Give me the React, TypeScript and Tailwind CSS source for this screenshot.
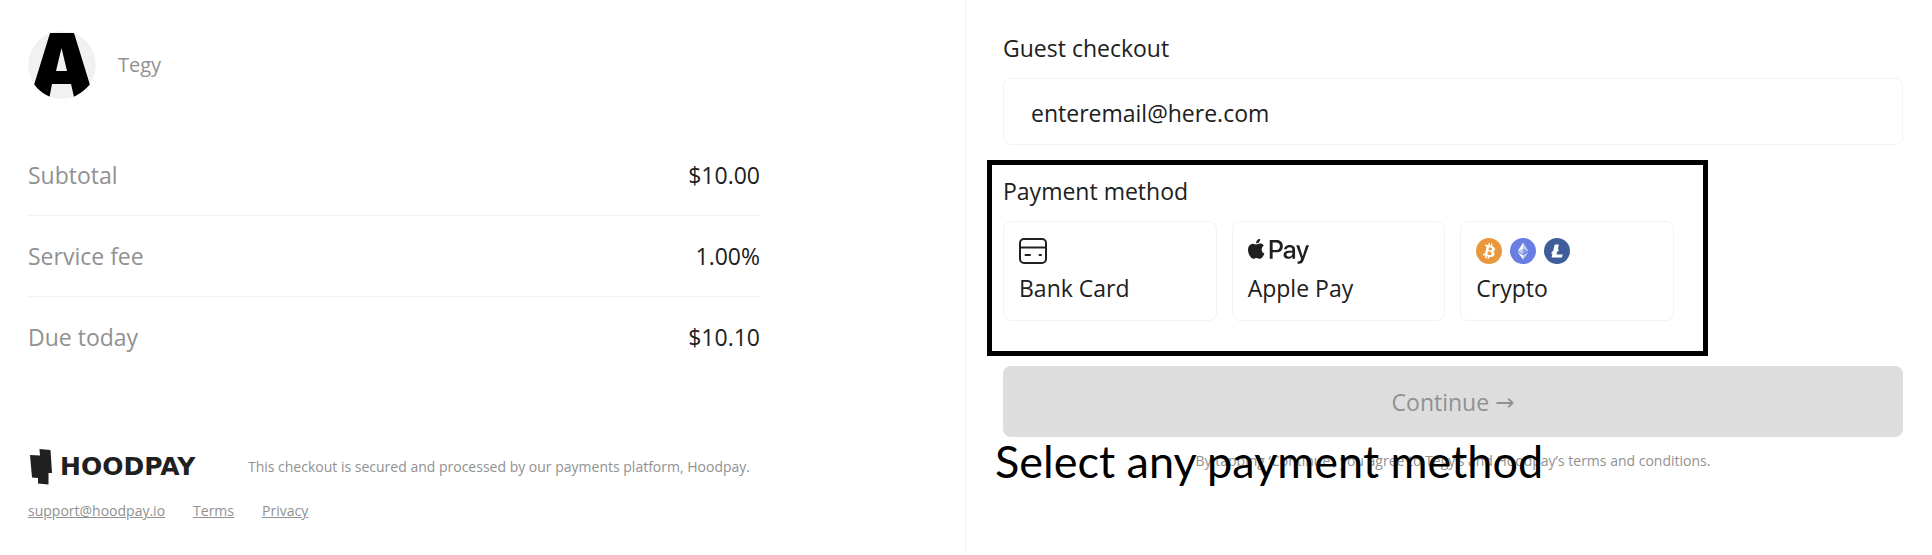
import type { ReactNode } from "react";
import { FaApplePay } from "react-icons/fa";

const charges = [
  { label: "Subtotal", value: "$10.00" },
  { label: "Service fee", value: "1.00%" },
  { label: "Due today", value: "$10.10" },
];

function Avatar() {
  return (
    <svg viewBox="0 0 68 68" className="size-[68px] shrink-0 rounded-full" aria-hidden="true">
      <circle cx="34" cy="34" r="34" fill="#f1f1f1" />
      <path
        fillRule="evenodd"
        d="M22 2H46L62 54Q55 61 46 66L43 53H24L21.500 66Q12 62 6 54ZM33.500 17L28 40H39Z"
        fill="#000"
      />
    </svg>
  );
}

function HoodpayMark() {
  return (
    <svg viewBox="0 0 22 36" className="h-9 w-[22px] shrink-0" aria-hidden="true">
      <path d="M9.500 0L20.500 1L22 24H18.500V35.500L8 34.500V29L2 28.500L0 6L10 6.500Z" fill="#202020" />
    </svg>
  );
}

function CardIcon() {
  return (
    <svg viewBox="0 0 28 26" className="h-[26px] w-7" fill="none" stroke="#202020" aria-hidden="true">
      <rect x="1" y="1" width="26" height="24" rx="4" strokeWidth="2" />
      <path d="M1 9.500H27" strokeWidth="2" />
      <path d="M6.500 17H11M20.500 17H22" strokeWidth="2" strokeLinecap="round" />
    </svg>
  );
}

function CryptoIcons() {
  return (
    <span className="flex gap-2">
      <svg viewBox="0 0 32 32" className="size-[26px]" aria-hidden="true">
        <circle cx="16" cy="16" r="16" fill="#e9983d" />
        <path
          fill="#fff"
          d="M23.189 14.020c.314-2.096-1.283-3.223-3.465-3.975l.708-2.840-1.728-.43-.69 2.765c-.454-.114-.92-.22-1.385-.326l.695-2.783L15.596 6l-.708 2.839c-.376-.086-.746-.17-1.104-.26l.002-.009-2.384-.595-.46 1.846s1.283.294 1.256.312c.7.175.826.638.805 1.006l-.806 3.235c.048.012.11.030.18.057l-.183-.045-1.130 4.532c-.086.212-.303.531-.793.410.018.025-1.256-.313-1.256-.313l-.858 1.978 2.250.561c.418.105.828.215 1.231.318l-.715 2.872 1.727.43.708-2.840c.472.127.930.245 1.378.357l-.706 2.828 1.728.43.715-2.866c2.948.558 5.164.333 6.097-2.333.752-2.146-.037-3.385-1.588-4.192 1.130-.260 1.980-1.003 2.207-2.538zm-3.950 5.538c-.533 2.147-4.148.986-5.320.695l.950-3.805c1.172.293 4.929.872 4.370 3.110zm.535-5.569c-.487 1.953-3.495.960-4.470.717l.860-3.450c.975.243 4.118.696 3.610 2.733z"
        />
      </svg>
      <svg viewBox="0 0 32 32" className="size-[26px]" aria-hidden="true">
        <circle cx="16" cy="16" r="16" fill="#687ee3" />
        <g fill="#fff">
          <path fillOpacity=".6" d="M16.200 5.500v7.800l6.600 2.950z" />
          <path d="M16.200 5.500L9.500 16.250l6.700-2.950z" />
          <path fillOpacity=".6" d="M16.200 21.200v5.300l6.600-9.100z" />
          <path d="M16.200 26.500v-5.300l-6.700-3.800z" />
          <path fillOpacity=".2" d="M16.200 20l6.600-3.750-6.600-2.950z" />
          <path fillOpacity=".6" d="M9.500 16.250L16.200 20v-6.700z" />
        </g>
      </svg>
      <svg viewBox="0 0 32 32" className="size-[26px]" aria-hidden="true">
        <circle cx="16" cy="16" r="16" fill="#3f5e99" />
        <path
          fill="#fff"
          d="M10.430 19.210l-1.430.550.690-2.760 1.450-.580L13.210 8h5.130l-1.520 6.190 1.410-.570-.680 2.750-1.430.570-.850 3.470H23L22.130 24H9.250z"
        />
      </svg>
    </span>
  );
}

function Method({ label, children }: { label: string; children: ReactNode }) {
  return (
    <button
      type="button"
      className="flex min-w-0 flex-1 flex-col gap-2 rounded-lg border border-[#f3f3f3] px-[15px] py-4 text-left"
    >
      <span className="flex h-[26px] items-center">{children}</span>
      <span className="leading-8">{label}</span>
    </button>
  );
}

export default function App() {
  return (
    <div className="grid min-h-screen grid-cols-2 bg-white font-['Open_Sans',sans-serif] text-[23px] leading-8 text-[#202020]">
      <section className="border-r border-[#f3f3f3] pt-[31px] pl-7 text-[#919191]">
        <div className="max-w-[732px]">
          <header className="flex items-center gap-[22px]">
            <Avatar />
            <h1 className="text-xl">Tegy</h1>
          </header>
          <dl className="mt-9 divide-y divide-[#f3f3f3]">
            {charges.map((c) => (
              <div key={c.label} className="flex justify-between py-6">
                <dt>{c.label}</dt>
                <dd className="text-[#202020]">{c.value}</dd>
              </div>
            ))}
          </dl>
          <footer className="mt-[72px] text-sm">
            <div className="flex items-center justify-between pr-2.5 pl-0.5">
              <div className="flex items-center gap-2">
                <HoodpayMark />
                <span className="font-['DejaVu_Sans',sans-serif] text-[25px] font-bold text-[#202020]">HOODPAY</span>
              </div>
              <p>This checkout is secured and processed by our payments platform, Hoodpay.</p>
            </div>
            <nav className="mt-3.5 flex gap-7 leading-6 underline">
              <a href="mailto:support@hoodpay.io">support@hoodpay.io</a>
              <a href="#terms">Terms</a>
              <a href="#privacy">Privacy</a>
            </nav>
          </footer>
        </div>
      </section>

      <main className="pt-8 pr-[29px] pl-[37px]">
        <label htmlFor="email" className="block">
          Guest checkout
        </label>
        <input
          id="email"
          type="email"
          defaultValue="enteremail@here.com"
          className="mt-3.5 block h-[67px] w-full rounded-lg border border-[#f3f3f3] px-[27px] pt-0.5 outline-none"
        />
        <section className="mt-[15px] -ml-4 max-w-[721px] border-5 border-black pt-2.5 pr-[29px] pb-[30px] pl-[11px]">
          <h2>Payment method</h2>
          <div className="mt-3.5 flex gap-[15px]">
            <Method label="Bank Card">
              <CardIcon />
            </Method>
            <Method label="Apple Pay">
              <FaApplePay viewBox="0 128 640 262" className="h-[25px] w-[61px]" aria-hidden="true" />
            </Method>
            <Method label="Crypto">
              <CryptoIcons />
            </Method>
          </div>
        </section>
        <button
          type="button"
          disabled
          className="mt-2.5 flex h-[71px] w-full items-center justify-center gap-1.5 rounded-lg bg-[#dddddd] text-[#919191]"
        >
          Continue <span className="font-['DejaVu_Sans',sans-serif]">→</span>
        </button>
        <div className="relative mt-3">
          <p className="text-center text-sm leading-6 text-[#919191]">
            By tapping ‘Continue’, you agree to Tegy’s and Hoodpay’s terms and conditions.
          </p>
          <p className="absolute -top-4 -left-2 font-['Lato',sans-serif] text-[45px] leading-[56px] whitespace-nowrap text-black">
            Select any payment method
          </p>
        </div>
      </main>
    </div>
  );
}
